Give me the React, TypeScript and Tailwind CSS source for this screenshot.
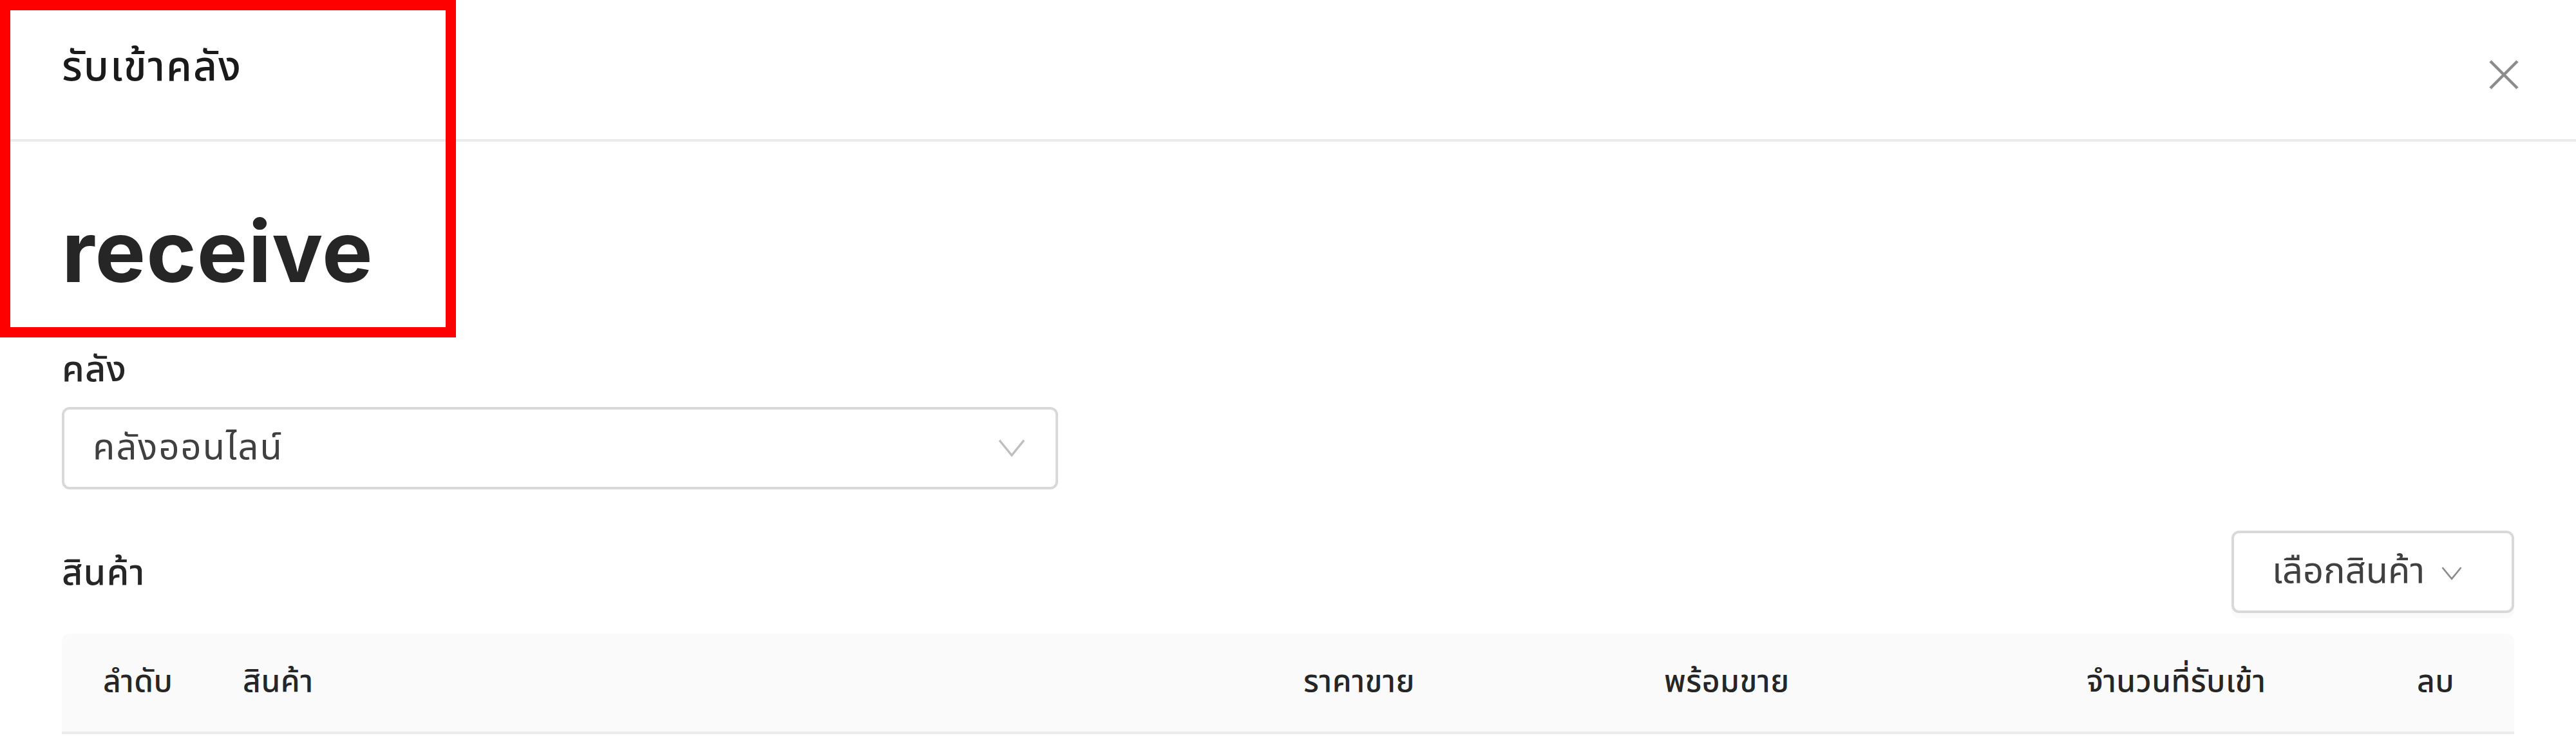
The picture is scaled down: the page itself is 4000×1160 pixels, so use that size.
import React from "react";

const thai = { fontFamily: '"Noto Sans Thai", "Noto Sans", "DejaVu Sans", sans-serif' };

function Chevron({ className }: { className?: string }) {
  return (
    <svg viewBox="0 0 40 29" className={className} fill="none">
      <path d="M2 3 L20 25 L38 3" stroke="currentColor" strokeWidth="3.5" strokeLinecap="square" strokeLinejoin="miter" />
    </svg>
  );
}

export default function App() {
  const headers = ["ลำดับ", "สินค้า", "ราคาขาย", "พร้อมขาย", "จำนวนที่รับเข้า", "ลบ"];
  return (
    <div className="relative w-[4000px] h-[1160px] overflow-hidden bg-white" style={thai}>
      {/* Modal header */}
      <div className="flex h-[220px] items-start justify-between border-b-4 border-[#ebebeb] px-[96px] pt-[62px]">
        <div className="text-[64px] leading-[88px] font-medium tracking-[2px] text-[#1a1a1a]">รับเข้าคลัง</div>
        <svg viewBox="0 0 48 48" className="mt-[30px] mr-[-8px] h-[48px] w-[48px] text-[#8c8c8c]" fill="none">
          <path d="M3 3 L45 45 M45 3 L3 45" stroke="currentColor" strokeWidth="4.5" />
        </svg>
      </div>

      {/* Modal body */}
      <div className="px-[96px] pt-[104px]">
        <h1
          className="text-[132px] leading-[132px] font-bold text-[#262626]"
          style={{ fontFamily: 'Inter, "Noto Sans", sans-serif', letterSpacing: "1px" }}
        >
          receive
        </h1>

        <div className="mt-[75px] text-[56px] leading-[88px] font-medium tracking-[1px] text-[#262626]">คลัง</div>

        <div className="mt-[13px] flex h-[128px] w-[1547px] items-center justify-between rounded-[12px] border-4 border-[#d9d9d9] pl-[44px] pr-[48px]">
          <span className="text-[56px] leading-[88px] tracking-[2px] text-[#404040]">คลังออนไลน์</span>
          <Chevron className="h-[29px] w-[40px] text-[#bfbfbf]" />
        </div>

        <div className="mt-[64px] flex h-[128px] items-center justify-between">
          <div className="pt-[6px] text-[56px] leading-[88px] font-medium tracking-[1px] text-[#262626]">สินค้า</div>
          <button className="flex h-[128px] w-[439px] items-center rounded-[12px] border-4 border-[#d9d9d9] bg-white pl-[59px] shadow-[0_8px_0_rgba(0,0,0,0.02)]">
            <span className="text-[56px] leading-[88px] text-[#404040]">เลือกสินค้า</span>
            <Chevron className="ml-[25px] mt-[6px] h-[22px] w-[34px] text-[#8c8c8c]" />
          </button>
        </div>

        <div className="mt-[32px] grid h-[156px] grid-cols-[217px_1647px_560px_656px_513px_215px] items-center rounded-t-[12px] border-b-4 border-[#ebebeb] bg-[#fafafa]">
          {headers.map((h) => (
            <div key={h} className="pl-[64px] text-[48px] leading-[88px] font-medium tracking-[0.5px] text-[#262626] whitespace-nowrap">
              {h}
            </div>
          ))}
        </div>
      </div>

      {/* Red annotation box */}
      <div className="pointer-events-none absolute left-0 top-0 h-[524px] w-[708px] border-[16px] border-[#ff0000]" />
    </div>
  );
}
